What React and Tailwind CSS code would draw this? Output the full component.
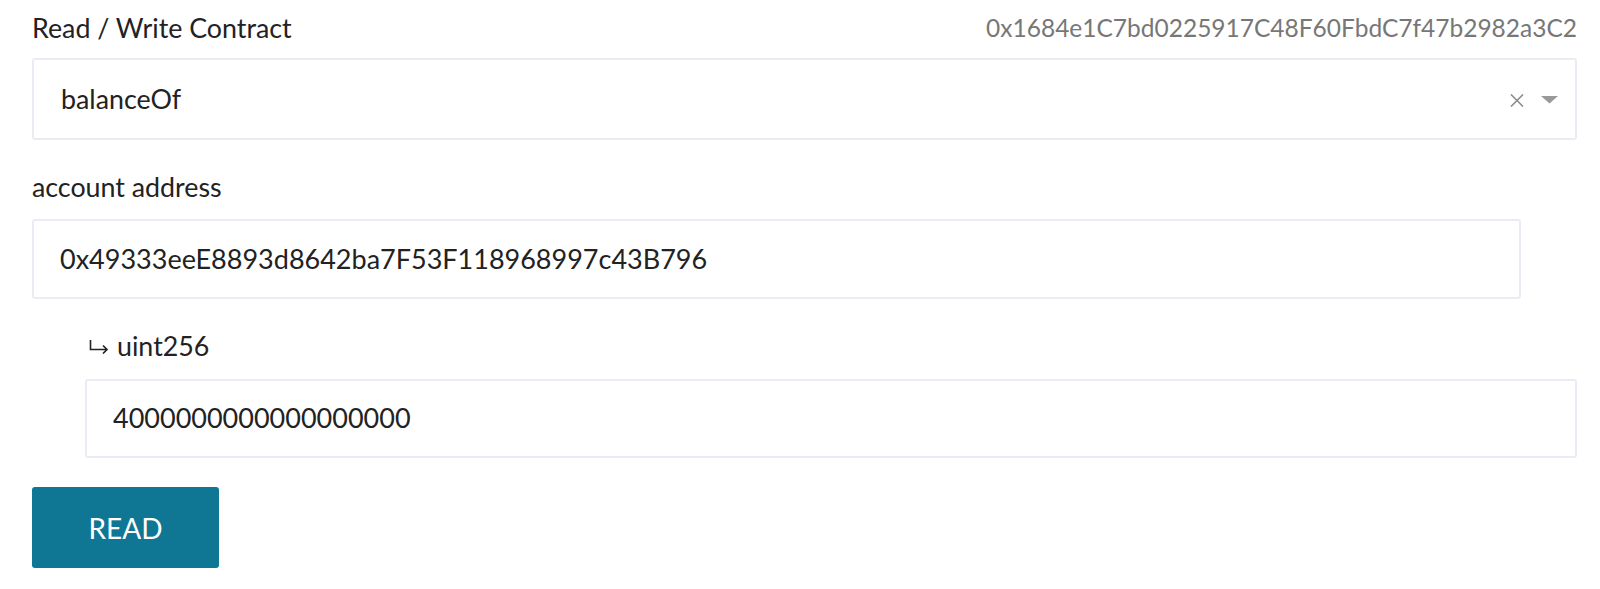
import React from "react";

export default function App() {
  return (
    <div className="w-[1600px] h-[589px] bg-white font-['Lato',sans-serif] text-[#222] overflow-hidden">
      <div className="pl-[32px] pr-[23px] pt-[14px]">
        <div className="flex items-center justify-between h-[28px]">
          <div className="text-[26.8px] leading-none">Read / Write Contract</div>
          <div className="text-[24.5px] leading-none text-[#777]">0x1684e1C7bd0225917C48F60FbdC7f47b2982a3C2</div>
        </div>
        <div className="mt-[16px] h-[82px] border-2 border-[#e9edf3] rounded-[3px] flex items-center pl-[27px] pr-[17px]">
          <div className="flex-1 text-[26.8px]">balanceOf</div>
          <div className="flex items-center gap-[17px]">
            <svg width="14" height="13" viewBox="0 0 14 13" className="mt-[2px]">
              <path d="M1 0.5 L13 12.5 M13 0.5 L1 12.5" stroke="#8c8c8c" strokeWidth="1.6" fill="none" />
            </svg>
            <svg width="17" height="8" viewBox="0 0 17 8" className="mt-[1px]">
              <path d="M0 0 L17 0 L8.5 7.5 Z" fill="#999" />
            </svg>
          </div>
        </div>
        <div className="mt-[34px] text-[26.8px] leading-none h-[27px] flex items-center">account address</div>
        <div className="mt-[18px] mr-[56px] h-[80px] border-2 border-[#e9edf3] rounded-[3px] flex items-center pl-[26px] text-[27px]">
          0x49333eeE8893d8642ba7F53F118968997c43B796
        </div>
        <div className="pl-[53px]">
          <div className="mt-[34px] text-[26.8px] leading-none h-[27px] flex items-center">
            <svg width="20" height="14" viewBox="0 0 20 14" className="ml-[4px] mr-[8px] mt-[1px]">
              <path d="M1.5 0 V9.5 H18 M14 5.5 L18 9.5 L14 13.5" stroke="#222" strokeWidth="1.6" fill="none" />
            </svg>
            uint256
          </div>
          <div className="mt-[19px] h-[79px] border-2 border-[#e9edf3] rounded-[3px] flex items-center pl-[26px] text-[27px]">
            4000000000000000000
          </div>
        </div>
        <button className="mt-[29px] w-[187px] h-[81px] bg-[#0f7694] rounded-[3px] text-white text-[28px] flex items-center justify-center">
          READ
        </button>
      </div>
    </div>
  );
}
